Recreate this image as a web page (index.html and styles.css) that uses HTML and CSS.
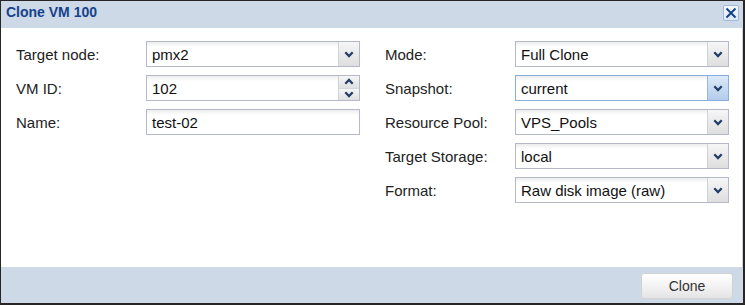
FILE: index.html
```html
<!DOCTYPE html>
<html lang="en">
<head>
    <meta charset="UTF-8">
    <title>Clone VM 100</title>
    <link rel="stylesheet" href="styles.css">
</head>
<body>

<div class="window">
    <!-- Title bar -->
    <div class="titlebar">
        <span class="title">Clone VM 100</span>
        <button class="close">
            <svg width="12" height="12" viewBox="0 0 12 12"><path d="M1.5 1.5 L10.5 10.5 M10.5 1.5 L1.5 10.5" stroke="#15428b" stroke-width="2" fill="none"/></svg>
        </button>
    </div>

    <!-- Form -->
    <div class="form">
        <div class="column">
            <div class="row">
                <label>Target node:</label>
                <div class="field">
                    <span class="value">pmx2</span>
                    <span class="trigger"><svg width="10" height="7" viewBox="0 0 10 7"><path d="M1.3 1.3 L5 5 L8.7 1.3" stroke="#223f6a" stroke-width="2.3" fill="none"/></svg></span>
                </div>
            </div>
            <div class="row">
                <label>VM ID:</label>
                <div class="field">
                    <span class="value">102</span>
                    <span class="spinner">
                        <span class="spin"><svg width="10" height="7" viewBox="0 0 10 7"><path d="M1.3 5.7 L5 2 L8.7 5.7" stroke="#223f6a" stroke-width="2.3" fill="none"/></svg></span>
                        <span class="spin"><svg width="10" height="7" viewBox="0 0 10 7"><path d="M1.3 1.3 L5 5 L8.7 1.3" stroke="#223f6a" stroke-width="2.3" fill="none"/></svg></span>
                    </span>
                </div>
            </div>
            <div class="row">
                <label>Name:</label>
                <div class="field">
                    <span class="value">test-02</span>
                </div>
            </div>
        </div>

        <div class="column">
            <div class="row">
                <label>Mode:</label>
                <div class="field">
                    <span class="value">Full Clone</span>
                    <span class="trigger"><svg width="10" height="7" viewBox="0 0 10 7"><path d="M1.3 1.3 L5 5 L8.7 1.3" stroke="#223f6a" stroke-width="2.3" fill="none"/></svg></span>
                </div>
            </div>
            <div class="row">
                <label>Snapshot:</label>
                <div class="field focused">
                    <span class="value">current</span>
                    <span class="trigger"><svg width="10" height="7" viewBox="0 0 10 7"><path d="M1.3 1.3 L5 5 L8.7 1.3" stroke="#223f6a" stroke-width="2.3" fill="none"/></svg></span>
                </div>
            </div>
            <div class="row">
                <label>Resource Pool:</label>
                <div class="field">
                    <span class="value">VPS_Pools</span>
                    <span class="trigger"><svg width="10" height="7" viewBox="0 0 10 7"><path d="M1.3 1.3 L5 5 L8.7 1.3" stroke="#223f6a" stroke-width="2.3" fill="none"/></svg></span>
                </div>
            </div>
            <div class="row">
                <label>Target Storage:</label>
                <div class="field">
                    <span class="value">local</span>
                    <span class="trigger"><svg width="10" height="7" viewBox="0 0 10 7"><path d="M1.3 1.3 L5 5 L8.7 1.3" stroke="#223f6a" stroke-width="2.3" fill="none"/></svg></span>
                </div>
            </div>
            <div class="row">
                <label>Format:</label>
                <div class="field">
                    <span class="value">Raw disk image (raw)</span>
                    <span class="trigger"><svg width="10" height="7" viewBox="0 0 10 7"><path d="M1.3 1.3 L5 5 L8.7 1.3" stroke="#223f6a" stroke-width="2.3" fill="none"/></svg></span>
                </div>
            </div>
        </div>
    </div>

    <!-- Buttons -->
    <div class="footer">
        <button class="btn">Clone</button>
    </div>
</div>

</body>
</html>
```

FILE: styles.css
```css
html, body {
    margin: 0;
    padding: 0;
}

body {
    font-family: 'Liberation Sans', Arial, sans-serif;
    color: #222;
    background: #fff;
}

.window {
    box-sizing: border-box;
    width: 745px;
    height: 305px;
    border-style: solid;
    border-color: #262626;
    border-width: 1px 2px 2px 1px;
    display: flex;
    flex-direction: column;
    background: #ced9e7;
}

.titlebar {
    box-sizing: border-box;
    height: 27px;
    padding: 3px 4px 0 5px;
    display: flex;
    justify-content: space-between;
    align-items: flex-start;
    background: #ced9e7;
}

.title {
    font-weight: bold;
    font-size: 14px;
    line-height: 16px;
    color: #15428b;
}

.close {
    box-sizing: border-box;
    width: 16px;
    height: 16px;
    margin-top: 1px;
    padding: 0;
    border: 1px solid #9fbbdc;
    border-radius: 2px;
    background: linear-gradient(#f7faff, #dce7f4);
    display: flex;
    align-items: center;
    justify-content: center;
}

.form {
    flex: 1;
    background: #fff;
    border-right: 1px solid #c9d2dd;
    padding: 13px 0 0 15px;
    display: flex;
    gap: 25px;
}

.column {
    width: 344px;
}

.row {
    display: flex;
    align-items: center;
    height: 26px;
    margin-bottom: 8px;
}

.row label {
    width: 130px;
    flex: none;
    font-size: 15px;
    line-height: 26px;
    padding-top: 2px;
    color: #222;
}

.field {
    box-sizing: border-box;
    width: 214px;
    height: 26px;
    border: 1px solid #b5b8c8;
    display: flex;
    background: linear-gradient(#ececec, #fff 5px);
    overflow: hidden;
}

.field.focused {
    border-color: #86aedc;
}

.value {
    flex: 1;
    padding: 3px 5px 0;
    font-size: 15px;
    line-height: 20px;
    color: #111;
    white-space: nowrap;
}

.trigger {
    flex: none;
    width: 20px;
    border-left: 1px solid #cfd2d8;
    background: linear-gradient(#f6f6f6, #dedede);
    display: flex;
    align-items: center;
    justify-content: center;
}

.focused .trigger {
    border-left-color: #98b9de;
    background: linear-gradient(#dce9f8, #b3cceb);
}

.spinner {
    flex: none;
    width: 20px;
    border-left: 1px solid #cfd2d8;
    display: flex;
    flex-direction: column;
}

.spin {
    flex: 1;
    background: linear-gradient(#f6f6f6, #e0e0e0);
    display: flex;
    align-items: center;
    justify-content: center;
}

.spin + .spin {
    border-top: 1px solid #d6d6d6;
}

.footer {
    box-sizing: border-box;
    height: 36px;
    padding: 6px 10px 0 0;
    display: flex;
    justify-content: flex-end;
    align-items: flex-start;
}

.btn {
    box-sizing: border-box;
    width: 92px;
    height: 26px;
    border: 1px solid #d3d3d3;
    border-radius: 3px;
    background: linear-gradient(#ffffff, #f3f3f3 50%, #e4e4e4);
    font-family: 'Liberation Sans', Arial, sans-serif;
    font-size: 14px;
    color: #333;
    padding: 0;
}
```
